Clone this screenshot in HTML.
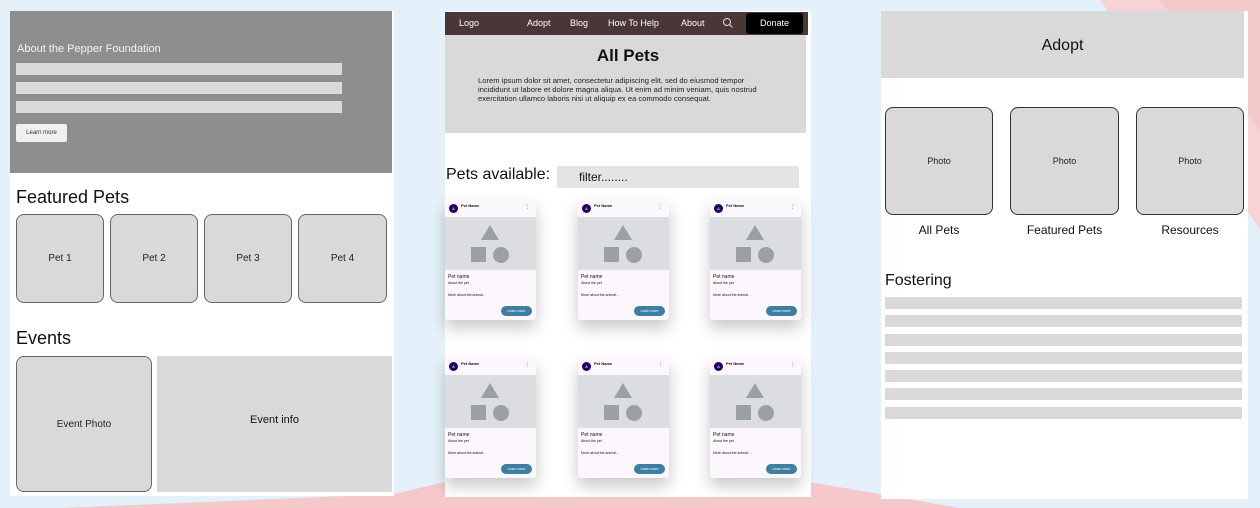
<!DOCTYPE html>
<html><head><meta charset="utf-8"><style>
*{margin:0;padding:0;box-sizing:border-box}
body{width:1260px;height:508px;overflow:hidden;background:#e4f1fa;position:relative;font-family:"Liberation Sans",sans-serif;color:#111}
.a{position:absolute}
.box{position:absolute;background:#d9d9d9;border:1px solid #666;border-radius:8px;display:flex;align-items:center;justify-content:center;font-size:10px;color:#222}
.bar{position:absolute;background:#d9d9d9}
.card{position:absolute;width:91px;height:120px;background:#fcf7fc;border-radius:3px;box-shadow:0 8px 16px rgba(0,0,0,.22);overflow:hidden}
.card .hd{height:17px;position:relative}
.card .av{position:absolute;left:4px;top:4px;width:9px;height:9px;border-radius:50%;background:#21005d;color:#fff;font-size:4px;text-align:center;line-height:9px}
.card .nm{position:absolute;left:16px;top:3px;font-size:4px;font-weight:bold}
.card .dt{position:absolute;right:6px;top:4px;font-size:5px}
.card .im{height:53px;background:#dcdde0;position:relative}
.card .t1{font-size:5px;margin:4px 0 0 3px}
.card .t2{font-size:3.5px;margin:1px 0 0 3px}
.card .t3{font-size:3.5px;margin:8px 0 0 3px}
.card .btn{position:absolute;right:4px;bottom:4px;width:31px;height:10px;border-radius:5px;background:#3e7ea0;color:#fff;font-size:3.5px;text-align:center;line-height:10px}
</style></head><body>
<svg class="a" style="left:0;top:0" width="1260" height="508">
<polygon points="1100,0 1260,0 1260,230 1240,200" fill="#f6d3d4"/>
<polygon points="1160,0 1260,0 1260,130" fill="#f3c9ca"/>
<polygon points="60,508 394,494 445,482 810,482 960,508" fill="#f5c8c9"/>
</svg>
<!-- left panel -->
<div class="a" style="left:10px;top:11px;width:384px;height:485px;background:#fff"></div>
<div class="a" style="left:10px;top:11px;width:382px;height:162px;background:#8e8e8e"></div>
<div class="a" style="left:17px;top:43px;font-size:11px;color:#f4f4f4">About the Pepper Foundation</div>
<div class="bar" style="left:16px;top:63px;width:326px;height:12px"></div>
<div class="bar" style="left:16px;top:82px;width:326px;height:12px"></div>
<div class="bar" style="left:16px;top:101px;width:326px;height:12px"></div>
<div class="a" style="left:16px;top:124px;width:51px;height:18px;background:#f0f0f0;border-radius:2px;font-size:6px;text-align:center;line-height:18px;color:#333">Learn more</div>
<div class="a" style="left:16px;top:187px;font-size:18px">Featured Pets</div>
<div class="box" style="left:16px;top:214px;width:88px;height:89px">Pet 1</div>
<div class="box" style="left:110px;top:214px;width:88px;height:89px">Pet 2</div>
<div class="box" style="left:204px;top:214px;width:88px;height:89px">Pet 3</div>
<div class="box" style="left:298px;top:214px;width:89px;height:89px">Pet 4</div>
<div class="a" style="left:16px;top:328px;font-size:18px">Events</div>
<div class="box" style="left:16px;top:356px;width:136px;height:136px">Event Photo</div>
<div class="a" style="left:157px;top:356px;width:235px;height:136px;background:#d9d9d9;font-size:11px;text-align:center;padding-top:58px">Event info</div>
<!-- middle panel -->
<div class="a" style="left:445px;top:11px;width:366px;height:486px;background:#fff"></div>
<div class="a" style="left:445px;top:12px;width:363px;height:23px;background:#4a3636;color:#fff;font-size:9px">
<span class="a" style="left:14px;top:6px">Logo</span>
<span class="a" style="left:82px;top:6px">Adopt</span>
<span class="a" style="left:125px;top:6px">Blog</span>
<span class="a" style="left:163px;top:6px">How To Help</span>
<span class="a" style="left:236px;top:6px">About</span>
<svg class="a" style="left:277px;top:5px" width="12" height="12"><circle cx="5" cy="5" r="3.5" stroke="#ddd" fill="none"/><line x1="7.5" y1="7.5" x2="10.5" y2="10.5" stroke="#ddd"/></svg>
<span class="a" style="left:301px;top:1px;width:57px;height:21px;background:#000;border-radius:3px;text-align:center;line-height:21px">Donate</span>
</div>
<div class="a" style="left:445px;top:35px;width:361px;height:98px;background:#d9d9d9"></div>
<div class="a" style="left:445px;top:46px;width:366px;text-align:center;font-size:17px;font-weight:bold">All Pets</div>
<div class="a" style="left:478px;top:76px;width:300px;font-size:7.6px;line-height:9px;color:#222">Lorem ipsum dolor sit amet, consectetur adipiscing elit, sed do eiusmod tempor incididunt ut labore et dolore magna aliqua. Ut enim ad minim veniam, quis nostrud exercitation ullamco laboris nisi ut aliquip ex ea commodo consequat.</div>
<div class="a" style="left:446px;top:166px;font-size:16px">Pets available:</div>
<div class="a" style="left:557px;top:166px;width:242px;height:22px;background:#e4e4e4;border-radius:2px;font-size:12px;padding:4px 0 0 22px">filter........</div>
<!-- cards -->
<div id="cards"></div>
<!-- right panel -->
<div class="a" style="left:881px;top:11px;width:367px;height:488px;background:#fff"></div>
<div class="a" style="left:881px;top:11px;width:363px;height:67px;background:#d9d9d9;text-align:center;font-size:16px;padding-top:26px">Adopt</div>
<div class="box" style="left:885px;top:107px;width:108px;height:108px;border-color:#333;font-size:9px">Photo</div>
<div class="box" style="left:1010px;top:107px;width:109px;height:108px;border-color:#333;font-size:9px">Photo</div>
<div class="box" style="left:1136px;top:107px;width:108px;height:108px;border-color:#333;font-size:9px">Photo</div>
<div class="a" style="left:885px;top:223px;width:108px;text-align:center;font-size:12px">All Pets</div>
<div class="a" style="left:1004px;top:223px;width:121px;text-align:center;font-size:12px">Featured Pets</div>
<div class="a" style="left:1136px;top:223px;width:108px;text-align:center;font-size:12px">Resources</div>
<div class="a" style="left:885px;top:272px;font-size:16px">Fostering</div>
<div class="bar" style="left:885px;top:297px;width:357px;height:12px"></div>
<div class="bar" style="left:885px;top:315px;width:357px;height:12px"></div>
<div class="bar" style="left:885px;top:334px;width:357px;height:12px"></div>
<div class="bar" style="left:885px;top:352px;width:357px;height:12px"></div>
<div class="bar" style="left:885px;top:370px;width:357px;height:12px"></div>
<div class="bar" style="left:885px;top:388px;width:357px;height:12px"></div>
<div class="bar" style="left:885px;top:407px;width:357px;height:12px"></div>
<script>
var xs=[445,578,710],ys=[200,358],h='';
ys.forEach(function(y){xs.forEach(function(x){
h+='<div class="card" style="left:'+x+'px;top:'+y+'px"><div class="hd"><div class="av">A</div><div class="nm">Pet Name</div><div class="dt">⋮</div></div><div class="im"><svg width="91" height="53"><polygon points="45,8 36,23 54,23" fill="#9aa0a6"/><rect x="26" y="30" width="15" height="15" fill="#9aa0a6"/><circle cx="56" cy="38" r="8" fill="#9aa0a6"/></svg></div><div class="t1">Pet name</div><div class="t2">About the pet</div><div class="t3">More about the animal...</div><div class="btn">Learn more</div></div>';
});});
document.getElementById('cards').innerHTML=h;
</script>
</body></html>
